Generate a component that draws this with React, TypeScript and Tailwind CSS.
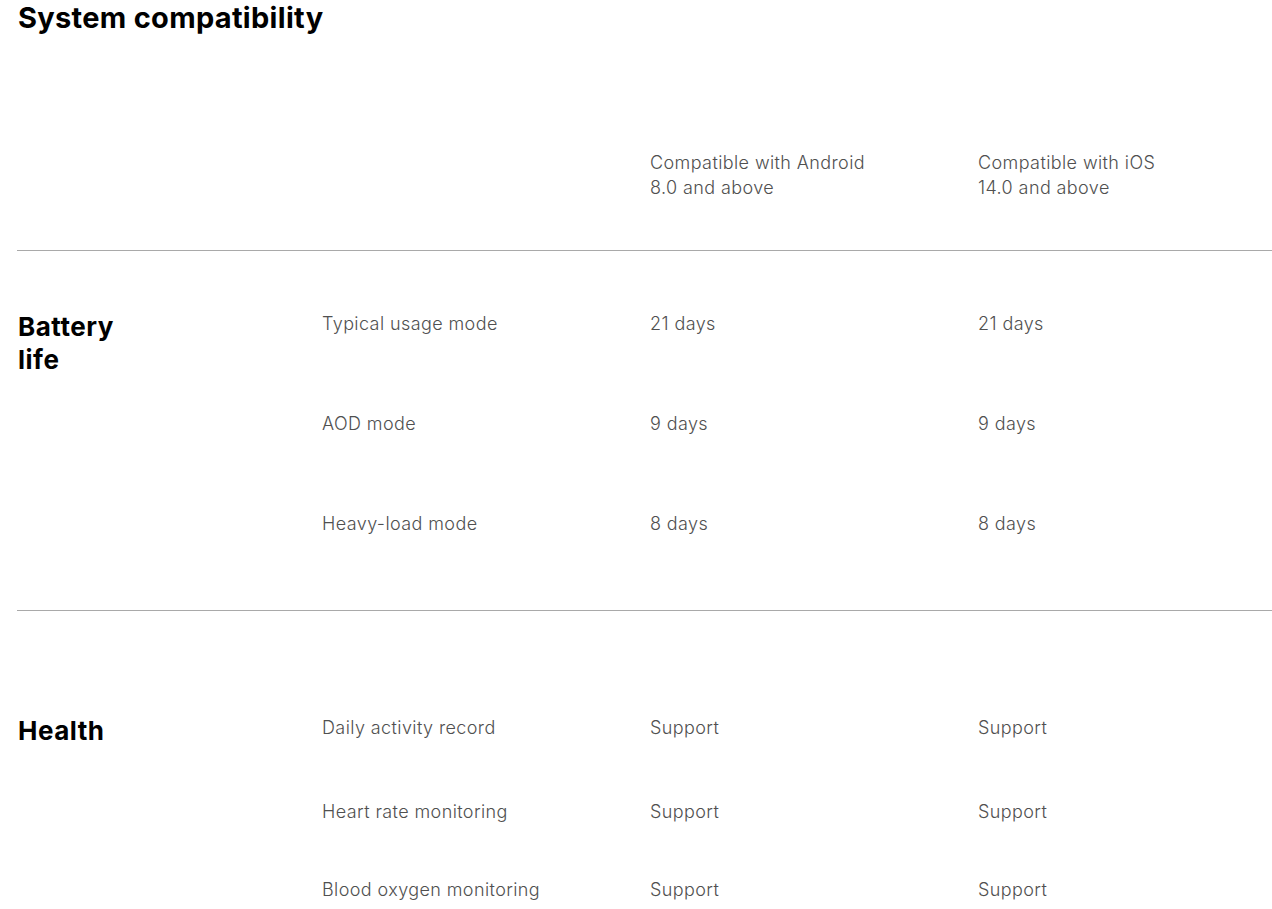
import React from "react";

interface Row {
  label: string;
  android: string;
  ios: string;
  height: string;
}

const battery: Row[] = [
  { label: "Typical usage mode", android: "21 days", ios: "21 days", height: "h-[100px]" },
  { label: "AOD mode", android: "9 days", ios: "9 days", height: "h-[100px]" },
  { label: "Heavy-load mode", android: "8 days", ios: "8 days", height: "h-[99px]" },
];

const health: Row[] = [
  { label: "Daily activity record", android: "Support", ios: "Support", height: "h-[84px]" },
  { label: "Heart rate monitoring", android: "Support", ios: "Support", height: "h-[78px]" },
  { label: "Blood oxygen monitoring", android: "Support", ios: "Support", height: "h-[78px]" },
];

const cols = "grid grid-cols-[305px_328px_328px_1fr]";

function Section({ title, rows, top }: { title: React.ReactNode; rows: Row[]; top: string }) {
  return (
    <div className={`${cols} ${top}`}>
      <h3 className="pl-px text-[26px] leading-[33px] font-bold tracking-[0.5px] text-black -mt-px">
        {title}
      </h3>
      <div className="col-span-3">
        {rows.map((r) => (
          <div key={r.label} className={`grid grid-cols-[328px_328px_1fr] ${r.height}`}>
            <span>{r.label}</span>
            <span>{r.android}</span>
            <span>{r.ios}</span>
          </div>
        ))}
      </div>
    </div>
  );
}

export default function App() {
  return (
    <div
      className="bg-white min-h-screen pl-[17px] text-[18px] leading-[25px] font-light tracking-[0.4px] text-[#505050]"
      style={{ fontFamily: "Inter, 'Noto Sans', sans-serif" }}
    >
      <h2 className="pl-px text-[29px] leading-[36px] font-bold text-black tracking-[0.3px]">
        System compatibility
      </h2>

      {/* Header */}
      <div className={`${cols} pt-[114px] pb-[50px]`}>
        <div />
        <div />
        <div>
          Compatible with Android
          <br />
          8.0 and above
        </div>
        <div>
          Compatible with iOS
          <br />
          14.0 and above
        </div>
      </div>
      <div className="h-px bg-[#a9a9a9]" />

      <Section
        title={
          <>
            Battery
            <br />
            life
          </>
        }
        rows={battery}
        top="pt-[60px]"
      />
      <div className="h-px bg-[#a9a9a9]" />

      <Section title="Health" rows={health} top="pt-[104px]" />
    </div>
  );
}
